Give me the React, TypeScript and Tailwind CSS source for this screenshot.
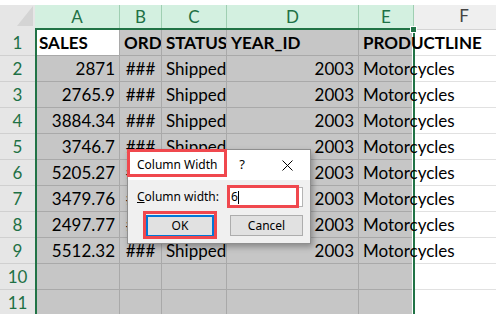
import React from "react";

const COLS = [
  { key: "A", w: "w-[85px]", align: "justify-end" },
  { key: "B", w: "w-[42px]", align: "justify-center" },
  { key: "C", w: "w-[65px]", align: "justify-start" },
  { key: "D", w: "w-[132px]", align: "justify-end" },
  { key: "E", w: "w-[55px]", align: "justify-start" },
];

const HEAD = ["SALES", "ORDERNUMBER", "STATUS", "YEAR_ID", "PRODUCTLINE"];
const SALES = ["2871", "2765.9", "3884.34", "3746.7", "5205.27", "3479.76", "2497.77", "5512.32"];

function Cell({ col, text, bold, active, first }: { col: number; text: string; bold?: boolean; active?: boolean; first?: boolean }) {
  const c = COLS[col];
  const spill = col === 4 && text !== "";
  return (
    <div
      className={`${c.w} shrink-0 h-full flex items-center px-[4px] border-r border-b border-[#a9a9a9] whitespace-nowrap ${
        first ? "justify-start" : c.align
      } ${active ? "bg-white" : "bg-[#c6c6c6]"} ${spill ? "overflow-visible" : "overflow-hidden"} ${bold ? "font-bold" : ""}`}
    >
      <span className={spill ? "relative z-10" : ""}>{text}</span>
    </div>
  );
}

export default function App() {
  const rows: string[][] = [
    HEAD,
    ...SALES.map((s) => [s, "###", "Shipped", "2003", "Motorcycles"]),
    ["", "", "", "", ""],
    ["", "", "", "", ""],
  ];

  return (
    <div className="relative w-[496px] h-[314px] overflow-hidden bg-white font-['Lato',sans-serif] text-[17px] text-black">
      <div className="h-[5px]" />
      {/* column headers */}
      <div className="flex h-[25px]">
        <div className="w-[35px] shrink-0 h-full bg-[#e6e6e6] relative">
          <svg className="absolute left-0 top-0" width="35" height="24" viewBox="0 0 35 24">
            <polygon points="17,21 33,21 33,1" fill="#d4d4d4" />
          </svg>
        </div>
        {COLS.map((c) => (
          <div
            key={c.key}
            className={`${c.w} shrink-0 h-full flex items-center justify-center bg-[#d3f0e0] border-r border-[#9fcfb2] text-[#1e7145] pb-[2px]`}
          >
            {c.key}
          </div>
        ))}
        <div className="w-[100px] shrink-0 h-full flex items-center justify-center bg-[#efefef] border-b border-[#d4d4d4] text-[#444] pb-[2px]">
          F
        </div>
      </div>

      {/* rows */}
      {rows.map((r, i) => (
        <div key={i} className="flex h-[26px]">
          <div className="w-[35px] shrink-0 h-full flex items-center justify-center bg-[#e6e6e6] border-b border-[#d0d0d0] text-[#1e7145]">
            {i + 1}
          </div>
          {r.map((t, j) => (
            <Cell key={j} col={j} text={t} bold={i === 0} active={i === 0 && j === 0} first={i === 0} />
          ))}
          <div className="w-[100px] shrink-0 h-full border-b border-[#e1e1e1] bg-white" />
        </div>
      ))}

      {/* selection border */}
      <div className="absolute left-[35px] top-[28px] w-[380px] h-[300px] border-l-2 border-t-2 border-r-2 border-[#217346]" />
      <div className="absolute left-[412px] top-[32px] w-px h-[290px] bg-white" />
      <div className="absolute left-[411px] top-[27px] w-[5px] h-[5px] bg-[#217346] outline outline-1 outline-white" />

      {/* dialog */}
      <div className="absolute left-[127px] top-[149px] w-[184px] h-[95px] border border-[#8f8f8f] bg-[#f0f0f0] shadow-[2px_3px_6px_rgba(0,0,0,0.3)] font-['Noto_Sans',sans-serif] text-[12px] text-black flex flex-col">
        <div className="h-[30px] bg-white flex items-center pl-[9px] pr-[17px]">
          <span>Column Width</span>
          <span className="ml-auto mr-[37px] text-[13px]">?</span>
          <svg width="11" height="11" viewBox="0 0 11 11" className="mt-[1px]">
            <path d="M0.5 0.5 L10.5 10.5 M10.5 0.5 L0.5 10.5" stroke="#000" strokeWidth="1" />
          </svg>
        </div>
        <div className="flex-1 pt-[7px] pl-[9px] pr-[7px]">
          <div className="flex items-center h-[20px]">
            <span>
              <span className="underline">C</span>olumn width:
            </span>
            <div className="ml-auto w-[76px] h-[20px] bg-white border border-[#b4b4b4] flex items-center pl-[3px]">
              <span>6</span>
              <span className="w-px h-[13px] bg-black" />
            </div>
          </div>
          <div className="flex mt-[8px] pl-[9px] gap-[16px]">
            <div className="w-[68px] h-[22px] bg-[#e1e1e1] border-2 border-[#0078d7] flex items-center justify-center">OK</div>
            <div className="w-[73px] h-[21px] bg-[#e1e1e1] border border-[#adadad] flex items-center justify-center">Cancel</div>
          </div>
        </div>

        {/* annotation boxes */}
        <div className="absolute left-[-1px] top-[-1px] w-[100px] h-[28px] border-[3px] border-[#f0484e]" />
        <div className="absolute left-[99px] top-[35px] w-[72px] h-[23px] border-[3px] border-[#f0484e]" />
        <div className="absolute left-[15px] top-[61px] w-[74px] h-[28px] border-[3px] border-[#f0484e]" />
      </div>
    </div>
  );
}
